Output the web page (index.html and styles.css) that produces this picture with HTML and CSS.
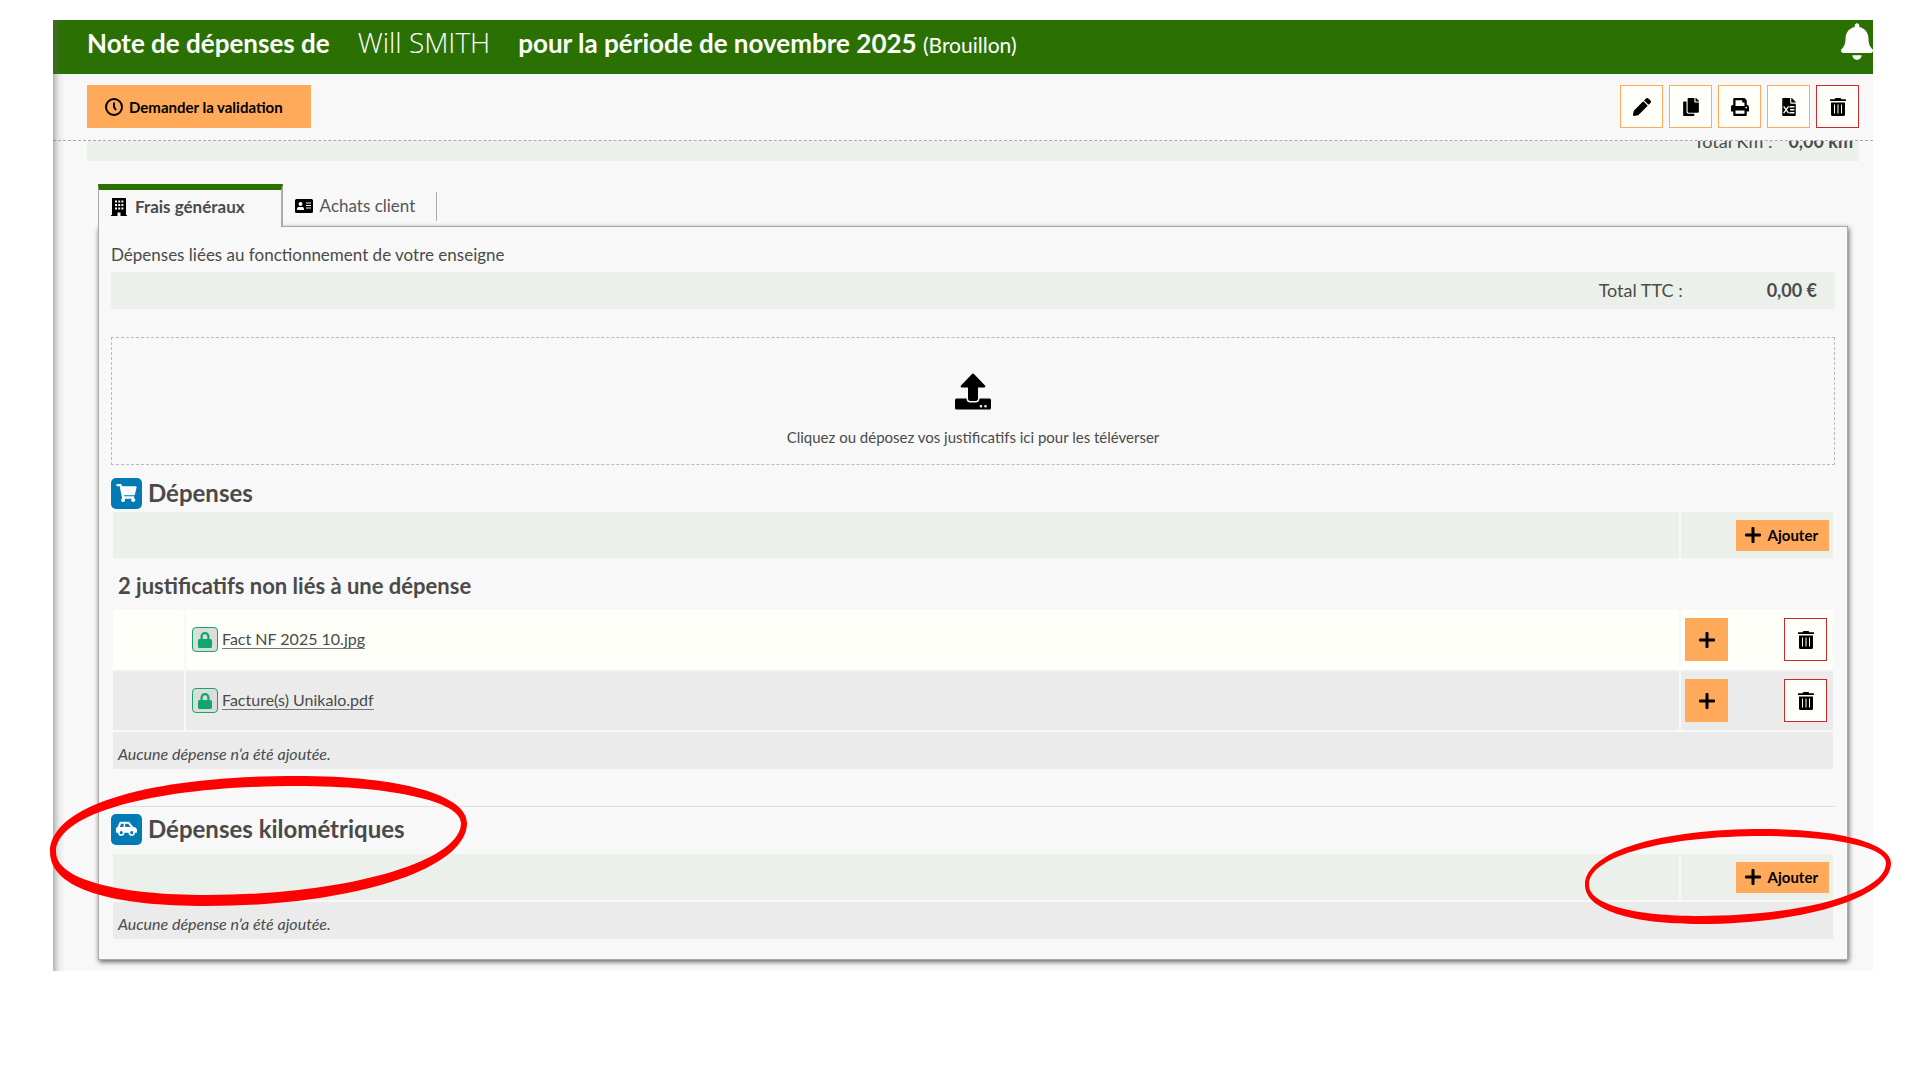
FILE: index.html
```html
<!DOCTYPE html>
<html lang="fr">
<head>
    <meta charset="UTF-8">
    <meta name="viewport" content="width=device-width, initial-scale=1.0">
    <title>Note de dépenses</title>
    <link rel="stylesheet" href="styles.css">
</head>
<body>
    <!-- Icônes partagées -->
    <svg class="sprite" aria-hidden="true">
        <symbol id="i-trash" viewBox="0 0 16 18">
            <path d="M5.500 0h5l1 1.200H15.500a.5.5 0 0 1 .5.5V3H0V1.700a.5.5 0 0 1 .5-.5h4z"/>
            <path fill-rule="evenodd" d="M1 4.500h14v12a1.500 1.500 0 0 1-1.500 1.500h-11A1.500 1.500 0 0 1 1 16.500zM4 6.500v9h1v-9zM7.500 6.500v9h1v-9zM11 6.500v9h1v-9z"/>
        </symbol>
        <symbol id="i-plus" viewBox="0 0 16 16">
            <path d="M6.500 1a1 1 0 0 1 1-1h1a1 1 0 0 1 1 1v5.500H15a1 1 0 0 1 1 1v1a1 1 0 0 1-1 1H9.500V15a1 1 0 0 1-1 1h-1a1 1 0 0 1-1-1V9.500H1a1 1 0 0 1-1-1v-1a1 1 0 0 1 1-1h5.500z"/>
        </symbol>
        <symbol id="i-lock" viewBox="0 0 14 16">
            <path fill-rule="evenodd" d="M2.500 7V4.500a4.500 4.500 0 0 1 9 0V7h1A1.500 1.500 0 0 1 14 8.500v6a1.500 1.500 0 0 1-1.500 1.500h-11A1.500 1.500 0 0 1 0 14.500v-6A1.500 1.500 0 0 1 1.500 7zM4.700 7h4.600V4.500a2.300 2.300 0 0 0-4.600 0z"/>
        </symbol>
    </svg>

    <div class="app">
        <header class="header">
            <h1 class="title">
                <span>Note de dépenses de</span>
                <span class="user-name">Will SMITH</span>
                <span>pour la période de novembre 2025 <small>(Brouillon)</small></span>
            </h1>
            <button class="bell" aria-label="Notifications">
                <svg viewBox="0 0 448 512"><path d="M224 512c35.320 0 63.970-28.650 63.970-64H160.030c0 35.350 28.650 64 63.970 64zm215.390-149.710c-19.320-20.760-55.470-51.990-55.470-154.290 0-77.700-54.480-139.900-127.940-155.160V32c0-17.670-14.320-32-31.980-32s-31.980 14.330-31.980 32v20.840C118.560 68.100 64.080 130.300 64.080 208c0 102.300-36.150 133.530-55.470 154.290-6 6.450-8.660 14.160-8.610 21.710.11 16.400 12.980 32 32.100 32h383.800c19.120 0 32-15.600 32.100-32 .05-7.550-2.610-15.270-8.610-21.710z"/></svg>
            </button>
        </header>

        <div class="toolbar">
            <button class="btn btn-primary">
                <svg class="icon-clock" viewBox="0 0 18 18"><circle cx="9" cy="9" r="8"/><path d="M9 4.500V9l2 3"/></svg>
                Demander la validation
            </button>
            <div class="actions">
                <button class="btn-icon" aria-label="Modifier">
                    <svg viewBox="0 0 512 512"><path d="M498 142l-46 46c-5 5-12 5-17 0L324 77c-5-5-5-12 0-17l46-46c19-19 49-19 68 0l60 60c19 19 19 49 0 68zm-214-42L22 362 0 484c-3 16 12 30 28 28l122-22 262-262c5-5 5-12 0-17L301 100c-5-5-12-5-17 0z"/></svg>
                </button>
                <button class="btn-icon" aria-label="Dupliquer">
                    <svg viewBox="0 0 448 512"><path d="M320 448v40c0 13-11 24-24 24H24c-13 0-24-11-24-24V120c0-13 11-24 24-24h72v296c0 31 25 56 56 56zm0-344V0H152c-13 0-24 11-24 24v368c0 13 11 24 24 24h272c13 0 24-11 24-24V128H344c-13 0-24-11-24-24zm121-31L375 7c-4-5-11-7-17-7h-6v96h96v-6c0-6-3-12-7-17z"/></svg>
                </button>
                <button class="btn-icon" aria-label="Imprimer">
                    <svg viewBox="0 0 512 512"><path fill-rule="evenodd" d="M448 192V77c0-8-3-17-9-23L394 9c-6-6-14-9-23-9H96C78 0 64 14 64 32v160c-35 0-64 29-64 64v112c0 9 7 16 16 16h48v96c0 18 14 32 32 32h320c18 0 32-14 32-32v-96h48c9 0 16-7 16-16V256c0-35-29-64-64-64zm-64 256H128v-96h256v96zm0-224H128V64h192v48c0 9 7 16 16 16h48v96zm48 72a24 24 0 1 1 0-48 24 24 0 0 1 0 48z"/></svg>
                </button>
                <button class="btn-icon" aria-label="Exporter en Excel">
                    <svg viewBox="0 0 384 512"><path d="M224 136V0H24C11 0 0 11 0 24v464c0 13 11 24 24 24h336c13 0 24-11 24-24V160H248c-13 0-24-11-24-24zm160-14v-1c0-6-3-12-7-17L279 7c-4-4-10-7-17-7h-6v128h128z"/><path class="icon-cut" d="M40 240l140 190M180 240L40 430M205 250h140M225 335h120M205 420h140"/></svg>
                </button>
                <button class="btn-icon btn-danger" aria-label="Supprimer">
                    <svg><use href="#i-trash"/></svg>
                </button>
            </div>
        </div>

        <main class="content">
            <div class="summary">
                <div class="summary-inner">
                    <span>Total Km :</span>
                    <strong>0,00 km</strong>
                </div>
            </div>

            <nav class="tabs">
                <a href="#frais" class="tab tab-active">
                    <svg viewBox="0 0 16 18"><path fill-rule="evenodd" d="M1 .5A.5.5 0 0 1 1.500 0h13a.5.5 0 0 1 .5.5V17h1v1H9.500v-3.500h-3V18H0v-1h1zM4 2.500v2h2v-2zM7.200 2.500v2h2v-2zM10.400 2.500v2h2v-2zM4 6v2h2V6zM7.200 6v2h2V6zM10.400 6v2h2V6zM4 9.500v2h2v-2zM7.200 9.500v2h2v-2zM10.400 9.500v2h2v-2z"/></svg>
                    Frais généraux
                </a>
                <a href="#achats" class="tab">
                    <svg viewBox="0 0 18 14"><path fill-rule="evenodd" d="M1.500 0h15A1.500 1.500 0 0 1 18 1.500v11a1.500 1.500 0 0 1-1.500 1.500h-15A1.500 1.500 0 0 1 0 12.500v-11A1.500 1.500 0 0 1 1.500 0zM5.500 3a2 2 0 1 0 0 4 2 2 0 0 0 0-4zM2 11h7v-1c0-1.500-1-2-2-2H4c-1 0-2 .5-2 2zM11 3.500v1h5v-1zM11 6v1h5V6zM11 8.500v1h5v-1z"/></svg>
                    Achats client
                </a>
            </nav>

            <div class="panel" id="frais">
                <p class="intro">Dépenses liées au fonctionnement de votre enseigne</p>
                <div class="total">
                    <span>Total TTC :</span>
                    <strong>0,00 €</strong>
                </div>

                <button class="dropzone">
                    <svg viewBox="0 0 36 36"><path d="M17 .4a1.500 1.500 0 0 1 2 0L30 12c.8.9.3 2-.8 2H23v11a2.500 2.500 0 0 1-2.500 2.500h-5A2.500 2.500 0 0 1 13 25V14H6.800C5.700 14 5.200 12.900 6 12z"/><path fill-rule="evenodd" d="M1.500 25H11.500a4 4 0 0 0 4 4h5a4 4 0 0 0 4-4h10A1.500 1.500 0 0 1 36 26.500v8a1.500 1.500 0 0 1-1.500 1.500h-33A1.500 1.500 0 0 1 0 34.500v-8A1.500 1.500 0 0 1 1.500 25zM26 31.500a1.300 1.300 0 1 0 0 2.600 1.300 1.300 0 0 0 0-2.600zM30.500 31.500a1.300 1.300 0 1 0 0 2.600 1.300 1.300 0 0 0 0-2.600z"/></svg>
                    Cliquez ou déposez vos justificatifs ici pour les téléverser
                </button>

                <section class="expenses">
                    <h2 class="section-title">
                        <span class="badge">
                            <svg viewBox="0 0 576 512"><path d="M528 301l47-208c4-15-8-29-23-29H159l-9-45C148 8 138 0 126 0H24C11 0 0 11 0 24v16c0 13 11 24 24 24h70l70 343c-17 9-28 28-28 49a56 56 0 1 0 95-40h210a56 56 0 1 0 64-10l5-26c4-15-8-29-23-29H218l-7-32h294c11 0 21-8 23-18z"/></svg>
                        </span>
                        Dépenses
                    </h2>
                    <table class="table">
                        <colgroup><col class="col-check"><col><col class="col-actions"></colgroup>
                        <tr class="row-head">
                            <td colspan="2"></td>
                            <td><button class="btn btn-add"><svg><use href="#i-plus"/></svg>Ajouter</button></td>
                        </tr>
                        <tr class="row-title">
                            <th colspan="3">2 justificatifs non liés à une dépense</th>
                        </tr>
                        <tr class="row-file">
                            <td></td>
                            <td><a href="#" class="file"><span class="lock"><svg><use href="#i-lock"/></svg></span><span class="file-name">Fact NF 2025 10.jpg</span></a></td>
                            <td>
                                <div class="row-actions">
                                    <button class="btn-icon btn-plus" aria-label="Ajouter une dépense"><svg><use href="#i-plus"/></svg></button>
                                    <button class="btn-icon btn-danger" aria-label="Supprimer"><svg><use href="#i-trash"/></svg></button>
                                </div>
                            </td>
                        </tr>
                        <tr class="row-file row-grey">
                            <td></td>
                            <td><a href="#" class="file"><span class="lock"><svg><use href="#i-lock"/></svg></span><span class="file-name">Facture(s) Unikalo.pdf</span></a></td>
                            <td>
                                <div class="row-actions">
                                    <button class="btn-icon btn-plus" aria-label="Ajouter une dépense"><svg><use href="#i-plus"/></svg></button>
                                    <button class="btn-icon btn-danger" aria-label="Supprimer"><svg><use href="#i-trash"/></svg></button>
                                </div>
                            </td>
                        </tr>
                        <tr class="row-empty">
                            <td colspan="3">Aucune dépense n’a été ajoutée.</td>
                        </tr>
                    </table>
                </section>

                <section class="mileage">
                    <h2 class="section-title">
                        <span class="badge">
                            <svg viewBox="0 0 640 448"><path fill-rule="evenodd" d="M544 160h-16L419 24C407 9 388 0 369 0H155c-26 0-50 16-59 40L48 165C20 172 0 198 0 228v92c0 9 7 16 16 16h48a96 96 0 0 0 192 0h128a96 96 0 0 0 192 0h48c9 0 16-7 16-16v-64c0-53-43-96-96-96zM160 384a48 48 0 1 1 0-96 48 48 0 0 1 0 96zm72-224H117l38-96h77zm48 0V64h89l77 96zm200 224a48 48 0 1 1 0-96 48 48 0 0 1 0 96z"/></svg>
                        </span>
                        Dépenses kilométriques
                    </h2>
                    <table class="table">
                        <colgroup><col><col class="col-actions"></colgroup>
                        <tr class="row-head">
                            <td></td>
                            <td><button class="btn btn-add"><svg><use href="#i-plus"/></svg>Ajouter</button></td>
                        </tr>
                        <tr class="row-empty">
                            <td colspan="2">Aucune dépense n’a été ajoutée.</td>
                        </tr>
                    </table>

                    <!-- Repères rouges -->
                    <svg class="mark mark-title" viewBox="50 776 417 130"><path fill-rule="evenodd" d="M50 852C50 805 150 776 297 776C400 776 467 795 467 823C467 870 350 906 207 906C115 906 50 890 50 852zM56 852C56 812 160 786 297 786C395 786 461 802 461 823C461 862 345 895 207 895C120 895 56 880 56 852z"/></svg>
                    <svg class="mark mark-add" viewBox="1585 829 306 95"><path fill-rule="evenodd" d="M1585 885C1585 851 1661 829 1763 829C1838 829 1891 843 1891 863C1891 898 1803 924 1700 924C1632 924 1585 910 1585 885zM1589 885C1589 855 1667 836 1763 836C1834 836 1886 847 1886 863C1886 893 1800 916 1700 916C1636 916 1589 905 1589 885z"/></svg>
                </section>
            </div>
        </main>
    </div>
</body>
</html>
```

FILE: styles.css
```css
* {
    margin: 0;
    padding: 0;
    box-sizing: border-box;
}

body {
    background-color: white;
    padding: 20px 47px 0 53px;
    font-family: Lato, "Open Sans", sans-serif;
    font-size: 16px;
    line-height: 20px;
    color: #4a4a4a;
}

button {
    font: inherit;
    color: black;
    border: none;
    cursor: pointer;
}

svg {
    fill: currentColor;
    flex: none;
}

.sprite {
    display: none;
}

.app {
    position: relative;
    background-color: #f8f8f8;
}

/* ombre du menu latéral */
.app::before {
    content: "";
    position: absolute;
    inset: 0 auto 0 0;
    width: 12px;
    background: linear-gradient(to right, rgba(100, 100, 90, 0.45), rgba(100, 100, 90, 0.1) 50%, transparent);
}

.header {
    display: flex;
    justify-content: space-between;
    align-items: flex-start;
    height: 54px;
    padding-left: 34px;
    background-color: #2a7003;
    color: white;
}

.title {
    display: flex;
    align-items: baseline;
    gap: 28px;
    padding-top: 5px;
    font-size: 26px;
    line-height: 34px;
    font-weight: bold;
}

.title small {
    font-size: 21px;
    font-weight: normal;
}

.user-name {
    font-family: "Open Sans", sans-serif;
    font-size: 28px;
    font-weight: 300;
}

.bell {
    width: 32px;
    margin-top: 3px;
    background: none;
    color: white;
}

.bell svg {
    display: block;
    width: 32px;
    height: 37px;
}

.toolbar {
    display: flex;
    justify-content: space-between;
    padding: 11px 14px 12px 34px;
    border-bottom: 1px dashed #aaa;
}

.btn {
    display: inline-flex;
    align-items: center;
    background-color: #ffa95a;
    font-size: 15px;
    font-weight: bold;
}

.btn-primary {
    gap: 6px;
    height: 43px;
    padding: 0 28px 0 18px;
}

.icon-clock {
    width: 18px;
    height: 18px;
    fill: none;
    stroke: black;
    stroke-width: 2;
}

.actions {
    display: flex;
    gap: 6px;
}

.btn-icon {
    display: flex;
    align-items: center;
    justify-content: center;
    width: 43px;
    height: 43px;
    border: 1px solid #ffa95a;
    background-color: #fffffa;
}

.btn-icon svg {
    width: 18px;
    height: 18px;
}

.btn-danger {
    border-color: #cc2a2a;
}

.btn-plus {
    background-color: #ffa95a;
}

.btn-plus svg {
    width: 16px;
    height: 16px;
}

.icon-cut {
    fill: none;
    stroke: #fffffa;
    stroke-width: 38;
}

.content {
    padding: 0 14px 11px 34px;
}

/* bandeau en partie caché sous la barre d'outils */
.summary {
    display: flex;
    align-items: flex-end;
    height: 20px;
    overflow: hidden;
    background-color: #ebf0eb;
}

.summary-inner {
    display: flex;
    justify-content: flex-end;
    gap: 16px;
    flex: 1;
    padding: 0 6px 10px 0;
    font-size: 18px;
}

.tabs {
    display: flex;
    margin: 23px 11px 0;
}

.tab {
    display: flex;
    align-items: center;
    gap: 7px;
    position: relative;
    padding: 7px 22px 6px 12px;
    font-size: 17px;
    color: #555;
    text-decoration: none;
}

.tab svg {
    width: 18px;
    height: 18px;
    color: black;
}

.tab::after {
    content: "";
    position: absolute;
    top: 8px;
    right: 0;
    width: 1px;
    height: 29px;
    background-color: #aaa;
}

.tab-active {
    z-index: 1;
    height: 43px;
    margin-bottom: -1px;
    padding: 0 36px 4px 11px;
    border-top: 6px solid #2a7003;
    border-right: 2px solid #aaa;
    border-left: 1px solid #aaa;
    background-color: #f8f8f8;
    font-weight: bold;
    color: #4a4a4a;
}

.tab-active::after {
    display: none;
}

.panel {
    margin: 0 11px;
    padding: 18px 12px 18px;
    border: 1px solid #aaa;
    box-shadow: 1px 2px 5px rgba(0, 0, 0, 0.6);
    background-color: #f8f8f8;
}

.intro {
    margin-bottom: 7px;
    font-size: 17px;
}

.total {
    display: flex;
    justify-content: flex-end;
    gap: 84px;
    height: 37px;
    padding: 8px 18px 0 0;
    background-color: #ebf0eb;
    font-size: 18px;
}

.dropzone {
    display: flex;
    flex-direction: column;
    align-items: center;
    gap: 17px;
    width: 100%;
    height: 128px;
    margin-top: 28px;
    padding-top: 35px;
    border: 1px dashed #bbb;
    background: none;
    font-size: 15px;
    color: #4a4a4a;
}

.dropzone svg {
    width: 36px;
    height: 37px;
    color: black;
}

.section-title {
    display: flex;
    align-items: center;
    gap: 6px;
    font-size: 24px;
    line-height: 32px;
}

.badge {
    display: flex;
    align-items: center;
    justify-content: center;
    width: 31px;
    height: 31px;
    border-radius: 5px;
    background-color: #007bb5;
    color: white;
}

.badge svg {
    width: 21px;
    height: 18px;
}

.expenses {
    padding-top: 12px;
}

.expenses .table {
    margin-top: 1px;
}

.table {
    width: 100%;
    table-layout: fixed;
    border-spacing: 2px;
}

.col-check {
    width: 71px;
}

.col-actions {
    width: 152px;
}

.row-head td {
    height: 46px;
    background-color: #ebf0eb;
    text-align: right;
    padding-right: 4px;
}

.btn-add {
    gap: 7px;
    height: 31px;
    padding: 0 11px 0 9px;
    vertical-align: middle;
}

.btn-add svg {
    width: 16px;
    height: 16px;
}

.row-title th {
    height: 48px;
    padding: 3px 5px 0;
    font-size: 22px;
    text-align: left;
}

.row-file td {
    height: 59px;
    padding: 0 6px;
    background-color: #fffffa;
}

.row-file td:last-child {
    padding-left: 4px;
}

.row-file.row-grey td {
    background-color: #ebebeb;
}

.file {
    display: inline-flex;
    align-items: center;
    gap: 4px;
    vertical-align: middle;
    font-size: 16px;
    color: #4a4a4a;
    text-decoration: none;
}

.file-name {
    border-bottom: 1px solid #777;
    line-height: 18px;
}

.lock {
    display: flex;
    align-items: center;
    justify-content: center;
    width: 26px;
    height: 25px;
    border: 1px solid #10a66c;
    border-radius: 4px;
    background-color: #dcdcdc;
    color: #10a66c;
}

.lock svg {
    width: 14px;
    height: 16px;
}

.row-actions {
    display: flex;
    justify-content: space-between;
}

.row-empty td {
    height: 37px;
    padding: 7px 5px 0;
    background-color: #ebebeb;
    font-size: 16px;
    font-style: italic;
}

.mileage {
    position: relative;
    margin-top: 35px;
    padding-top: 6px;
    border-top: 1px solid #ddd;
}

.mileage .table {
    margin-top: 7px;
}

.mark {
    position: absolute;
    fill: red;
    pointer-events: none;
}

.mark-title {
    top: -31px;
    left: -61px;
    width: 417px;
    height: 130px;
}

.mark-add {
    top: 22px;
    right: -56px;
    width: 306px;
    height: 95px;
}
```
